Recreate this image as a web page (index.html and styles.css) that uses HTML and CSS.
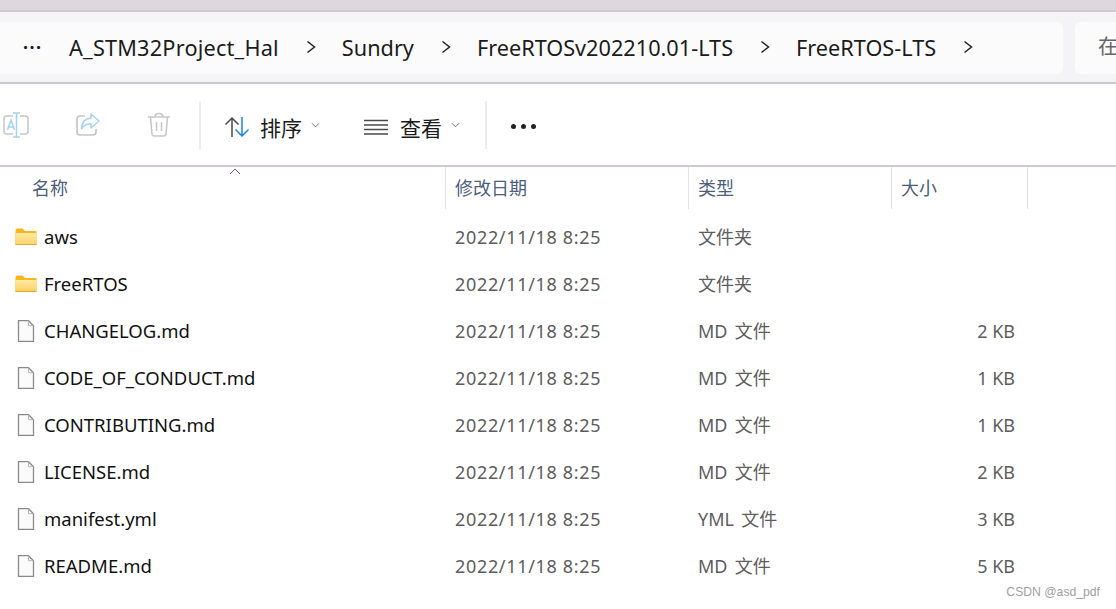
FILE: index.html
```html
<!DOCTYPE html>
<html lang="zh-CN">
<head>
    <meta charset="UTF-8">
    <meta name="viewport" content="width=device-width, initial-scale=1.0">
    <title>FreeRTOS-LTS</title>
    <link rel="stylesheet" href="styles.css">
</head>
<body>
    <svg class="defs" width="0" height="0">
        <defs>
            <linearGradient id="folderFill" x1="0" y1="0" x2="0" y2="1">
                <stop offset="0" stop-color="#ffe9a0"/>
                <stop offset="1" stop-color="#fdd268"/>
            </linearGradient>
            <symbol id="folder" viewBox="0 0 22 18">
                <path d="M0.5 2.5q0-2 2-2h5l2.5 2.5h11.500v14h-21z" fill="#f6b61f"/>
                <path d="M0.500 5h21v11.500h-21z" fill="url(#folderFill)"/>
                <path d="M0.500 16.500h21" stroke="#e5a92c" fill="none"/>
            </symbol>
            <symbol id="file" viewBox="0 0 18 22">
                <path d="M1.500 0.700h10l5 5v15.600h-15z" fill="#fbfbfb" stroke="#8a8a8a" stroke-width="1.300"/>
                <path d="M11.500 0.700v5h5" fill="none" stroke="#b5b5b5"/>
            </symbol>
        </defs>
    </svg>

    <div class="top-band"></div>

    <div class="address-bar">
        <div class="crumbs">
            <span class="more-dots">···</span>
            <span class="crumb first">A_STM32Project_Hal</span>
            <svg class="chevron" viewBox="0 0 10 14"><path d="M1.500 1.500l7 5.500-7 5.500"/></svg>
            <span class="crumb">Sundry</span>
            <svg class="chevron" viewBox="0 0 10 14"><path d="M1.500 1.500l7 5.500-7 5.500"/></svg>
            <span class="crumb">FreeRTOSv202210.01-LTS</span>
            <svg class="chevron" viewBox="0 0 10 14"><path d="M1.500 1.500l7 5.500-7 5.500"/></svg>
            <span class="crumb">FreeRTOS-LTS</span>
            <svg class="chevron" viewBox="0 0 10 14"><path d="M1.500 1.500l7 5.500-7 5.500"/></svg>
        </div>
        <div class="search">在</div>
    </div>

    <div class="toolbar">
        <svg class="tool-icon rename" viewBox="0 0 26 26" fill="none">
            <path d="M10 4H3.500q-2.500 0-2.500 2.500v13q0 2.500 2.500 2.500H10M17 4h5q3 0 3 2.500v13q0 2.500-3 2.500h-5" stroke="#c6c6c6" stroke-width="1.500"/>
            <path d="M13.500 1v24M10 1h7M10 25h7M4.500 18l3.500-10 3.500 10M5.800 15h4.500" stroke="#a5d2f3" stroke-width="1.500"/>
        </svg>
        <svg class="tool-icon share" viewBox="0 0 26 26" fill="none">
            <path d="M10 4H5q-3 0-3 3v13q0 3 3 3h13q3 0 3-3v-3" stroke="#c6c6c6" stroke-width="1.700"/>
            <path d="M16 2l8 7-8 7v-4q-6-.5-9.500 4.500Q7 7 16 6z" stroke="#a5d2f3" stroke-width="1.500" stroke-linejoin="round"/>
        </svg>
        <svg class="tool-icon trash" viewBox="0 0 26 26" fill="none" stroke="#c6c6c6" stroke-width="1.500">
            <path d="M2 5h22M9 5q0-3.500 4-3.500T17 5M4.500 5l1.500 17q.2 2 2.200 2h9.600q2 0 2.200-2l1.500-17M10.500 10v9M15.500 10v9"/>
        </svg>
        <div class="tool-sep"></div>
        <button class="tool-btn sort-btn">
            <svg class="btn-icon" viewBox="0 0 26 22" fill="none" stroke-width="1.500">
                <path d="M8 21V2M1.500 8.500L8 2l6.500 6.500" stroke="#4a4a4a"/>
                <path d="M18 1v19M11.500 13.500L18 20l6.500-6.500" stroke="#1a86d8"/>
            </svg>
            <span>排序</span>
            <svg class="caret" viewBox="0 0 10 6"><path d="M1 1l4 4 4-4"/></svg>
        </button>
        <button class="tool-btn view-btn">
            <svg class="btn-icon lines" viewBox="0 0 24 16" fill="none" stroke="#4a4a4a" stroke-width="1.300">
                <path d="M0 1.500h24M0 6h24M0 10.500h24M0 15h24"/>
            </svg>
            <span>查看</span>
            <svg class="caret" viewBox="0 0 10 6"><path d="M1 1l4 4 4-4"/></svg>
        </button>
        <div class="tool-sep last"></div>
        <div class="tool-more"><i></i><i></i><i></i></div>
    </div>

    <div class="list-head">
        <div class="col-head name-head">名称</div>
        <div class="col-head">修改日期</div>
        <div class="col-head">类型</div>
        <div class="col-head">大小</div>
        <svg class="sort-arrow" viewBox="0 0 12 7"><path d="M1 6l5-5 5 5"/></svg>
    </div>

    <div class="file-list">
        <div class="row"><div class="name"><svg class="ico"><use href="#folder"/></svg>aws</div><div class="cell date">2022/11/18 8:25</div><div class="cell type">文件夹</div><div class="cell size"></div></div>
        <div class="row"><div class="name"><svg class="ico"><use href="#folder"/></svg>FreeRTOS</div><div class="cell date">2022/11/18 8:25</div><div class="cell type">文件夹</div><div class="cell size"></div></div>
        <div class="row"><div class="name"><svg class="ico doc"><use href="#file"/></svg>CHANGELOG.md</div><div class="cell date">2022/11/18 8:25</div><div class="cell type">MD 文件</div><div class="cell size">2 KB</div></div>
        <div class="row"><div class="name"><svg class="ico doc"><use href="#file"/></svg>CODE_OF_CONDUCT.md</div><div class="cell date">2022/11/18 8:25</div><div class="cell type">MD 文件</div><div class="cell size">1 KB</div></div>
        <div class="row"><div class="name"><svg class="ico doc"><use href="#file"/></svg>CONTRIBUTING.md</div><div class="cell date">2022/11/18 8:25</div><div class="cell type">MD 文件</div><div class="cell size">1 KB</div></div>
        <div class="row"><div class="name"><svg class="ico doc"><use href="#file"/></svg>LICENSE.md</div><div class="cell date">2022/11/18 8:25</div><div class="cell type">MD 文件</div><div class="cell size">2 KB</div></div>
        <div class="row"><div class="name"><svg class="ico doc"><use href="#file"/></svg>manifest.yml</div><div class="cell date">2022/11/18 8:25</div><div class="cell type">YML 文件</div><div class="cell size">3 KB</div></div>
        <div class="row"><div class="name"><svg class="ico doc"><use href="#file"/></svg>README.md</div><div class="cell date">2022/11/18 8:25</div><div class="cell type">MD 文件</div><div class="cell size">5 KB</div></div>
    </div>

    <div class="watermark">CSDN @asd_pdf</div>
</body>
</html>
```

FILE: styles.css
```css
html, body {
    height: 100%;
}

body {
    margin: 0;
    position: relative;
    overflow: hidden;
    background-color: #fff;
    color: #1b1b1b;
    font-family: "Noto Sans", "Noto Sans CJK SC", sans-serif;
}

.defs {
    position: absolute;
}

.top-band {
    height: 10px;
    background-color: #dcd8de;
    border-bottom: 2px solid #cfcbd0;
}

/* address bar */
.address-bar {
    display: flex;
    gap: 12px;
    height: 52px;
    padding: 10px 0 8px;
    background-color: #f4f3f5;
    border-bottom: 2px solid #cdc9ce;
}

.crumbs {
    display: flex;
    flex: none;
    align-items: center;
    width: 1063px;
    padding: 0 0 2px 23px;
    box-sizing: border-box;
    background-color: #fbfbfb;
    border-radius: 0 6px 6px 0;
    font-size: 21.7px;
}

.more-dots {
    width: 46px;
    font-weight: 700;
    font-size: 18px;
    letter-spacing: 1.500px;
}

.crumb {
    white-space: nowrap;
}

.crumb.first {
    letter-spacing: 0.2px;
}

.chevron {
    width: 10px;
    height: 14px;
    margin: 0 26px 0 27px;
    fill: none;
    stroke: #222;
    stroke-width: 1.500;
}

.search {
    flex: 1;
    padding-left: 23px;
    background-color: #fbfbfb;
    border-radius: 6px 0 0 6px;
    color: #666;
    font-size: 20px;
    line-height: 50px;
}

/* command bar */
.toolbar {
    display: flex;
    align-items: center;
    height: 81px;
    border-bottom: 2px solid #cdc9ce;
}

.tool-icon {
    width: 26px;
    height: 26px;
    flex: none;
}

.rename {
    margin-left: 3px;
}

.share {
    margin-left: 46px;
}

.trash {
    margin-left: 45px;
}

.tool-sep {
    width: 2px;
    height: 48px;
    margin-left: 27px;
    background-color: #ececec;
}

.tool-sep.last {
    margin-left: 25px;
}

.tool-btn {
    display: flex;
    align-items: center;
    margin-top: 4px;
    padding: 0;
    border: none;
    background: none;
    color: #1b1b1b;
    font-family: inherit;
    font-size: 21px;
}

.sort-btn {
    margin-left: 23px;
}

.view-btn {
    margin-left: 44px;
}

.btn-icon {
    width: 26px;
    height: 22px;
    margin-right: 10px;
}

.btn-icon.lines {
    width: 24px;
    height: 16px;
    margin-right: 12px;
}

.caret {
    width: 9px;
    height: 6px;
    margin: 0 0 4px 9px;
    fill: none;
    stroke: #666;
}

.tool-more {
    display: flex;
    gap: 5px;
    margin: 4px 0 0 24px;
}

.tool-more i {
    width: 5px;
    height: 5px;
    border-radius: 50%;
    background-color: #222;
}

/* details list */
.list-head {
    position: relative;
    display: grid;
    grid-template-columns: 446px 243px 203px 136px;
    height: 40px;
}

.col-head {
    padding-left: 9px;
    border-right: 1px solid #e5e5e5;
    color: #4c607a;
    font-size: 18px;
    line-height: 42px;
}

.name-head {
    padding-left: 32px;
}

.sort-arrow {
    position: absolute;
    left: 229px;
    top: 1px;
    width: 12px;
    height: 7px;
    fill: none;
    stroke: #666;
}

.file-list {
    padding-top: 6px;
}

.row {
    display: grid;
    grid-template-columns: 446px 244px 202px 136px;
    align-items: center;
    height: 47px;
    font-size: 18px;
}

.name {
    display: flex;
    align-items: center;
    color: #111;
    font-size: 18.500px;
}

.ico {
    width: 22px;
    height: 18px;
    margin: 0 7px 0 15px;
    flex: none;
}

.ico.doc {
    width: 18px;
    height: 22px;
    margin: 0 9px 0 17px;
}

.cell {
    color: #5d5d5d;
}

.cell.date {
    padding-left: 9px;
    letter-spacing: 0.670px;
}

.cell.type {
    padding: 0 0 2px 8px;
    word-spacing: 2.500px;
}

.cell.size {
    padding-right: 13px;
    text-align: right;
}

.watermark {
    position: absolute;
    right: 16px;
    bottom: 10px;
    color: #a0a0a0;
    font-family: "Liberation Sans", sans-serif;
    font-size: 12.200px;
}
```
